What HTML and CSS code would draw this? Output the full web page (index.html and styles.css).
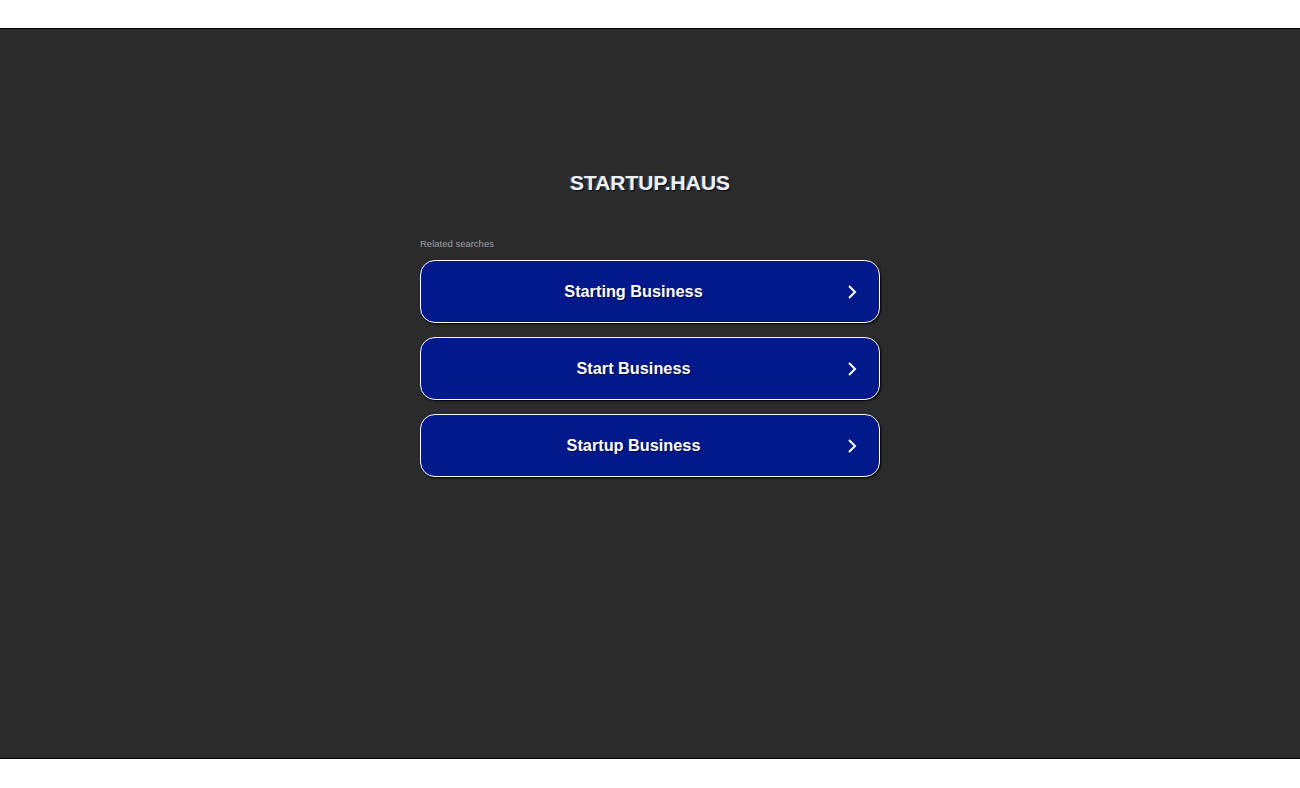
FILE: index.html
```html
<!DOCTYPE html>
<html>
<head>
<meta charset="utf-8">
<link rel="stylesheet" href="styles.css">
</head>
<body>
<div class="top"></div>
<main class="stage">
  <h1 class="domain">STARTUP.HAUS</h1>
  <section class="related">
    <div class="label">Related searches</div>
    <a class="btn" href="#"><span class="txt">Starting Business</span><span class="arrow"><svg width="12" height="16" viewBox="0 0 12 16"><path d="M3 2 L9 8 L3 14" fill="none" stroke="#fff" stroke-width="2"/></svg></span></a>
    <a class="btn" href="#"><span class="txt">Start Business</span><span class="arrow"><svg width="12" height="16" viewBox="0 0 12 16"><path d="M3 2 L9 8 L3 14" fill="none" stroke="#fff" stroke-width="2"/></svg></span></a>
    <a class="btn" href="#"><span class="txt">Startup Business</span><span class="arrow"><svg width="12" height="16" viewBox="0 0 12 16"><path d="M3 2 L9 8 L3 14" fill="none" stroke="#fff" stroke-width="2"/></svg></span></a>
  </section>
</main>
</body>
</html>
```
FILE: styles.css
```css
html, body { margin: 0; padding: 0; background: #fff; font-family: "Liberation Sans", Arial, sans-serif; }
.top { height: 28px; }
.stage {
  height: 729px;
  background: #2b2b2b;
  border-top: 1px solid #000;
  border-bottom: 1px solid #000;
  display: flex;
  flex-direction: column;
  align-items: center;
}
.domain {
  margin: 142px 0 0;
  font-size: 21px;
  line-height: 24px;
  font-weight: bold;
  color: #f0f0f0;
  text-shadow: -1px 0 1px rgba(80,140,255,0.7), 1px 1px 1px rgba(0,0,0,0.9);
}
.related { width: 460px; margin-top: 43px; }
.label { font-size: 9.5px; color: #9aa0aa; line-height: 12px; margin-bottom: 10px; }
.btn {
  display: flex;
  align-items: center;
  height: 61px;
  border: 1px solid #fff;
  border-radius: 15px;
  background: #02198b;
  box-shadow: 1px 1px 2px #000;
  text-decoration: none;
  margin-bottom: 14px;
  padding: 0 17px 0 20px;
}
.txt {
  flex: 1;
  text-align: center;
  color: #fff;
  font-weight: bold;
  font-size: 16.3px;
  text-shadow: 1px 1px 1px rgba(0,0,0,0.6);
}
.arrow { width: 20px; margin-left: 16px; display: flex; justify-content: center; }
.arrow svg { display: block; }
```
